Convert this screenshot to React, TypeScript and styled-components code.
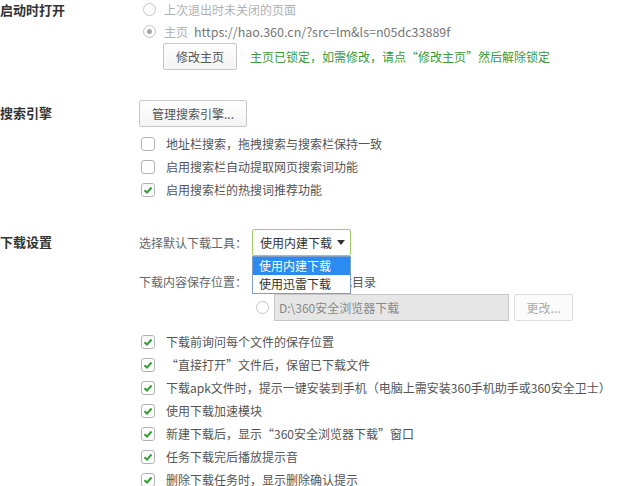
import React from 'react';
import styled, { createGlobalStyle } from 'styled-components';

const GlobalStyle = createGlobalStyle`
  body {
    margin: 0;
    background: #fff;
    font-family: 'Noto Sans CJK SC', 'Microsoft YaHei', sans-serif;
    font-size: 12px;
    color: #555;
  }
`;

const searchOptions = [
  { label: '地址栏搜索，拖拽搜索与搜索栏保持一致', checked: false },
  { label: '启用搜索栏自动提取网页搜索词功能', checked: false },
  { label: '启用搜索栏的热搜词推荐功能', checked: true },
];

const downloadOptions = [
  '下载前询问每个文件的保存位置',
  '“直接打开”文件后，保留已下载文件',
  '下载apk文件时，提示一键安装到手机（电脑上需安装360手机助手或360安全卫士）',
  '使用下载加速模块',
  '新建下载后，显示“360安全浏览器下载”窗口',
  '任务下载完后播放提示音',
  '删除下载任务时，显示删除确认提示',
];

const Check: React.FC<{ checked: boolean; label: string }> = ({ checked, label }) => (
  <CheckRow>
    <CheckBox>
      {checked && (
        <svg width='10' height='10' viewBox='0 0 10 10'>
          <path d='M1.5 5.2 L4 7.6 L8.5 2.5' fill='none' stroke='#32a032' strokeWidth='2.1' />
        </svg>
      )}
    </CheckBox>
    <CheckText>{label}</CheckText>
  </CheckRow>
);

export default function App() {
  return (
    <Page>
      <GlobalStyle />
      <Section $top={0}>
        <SectionTitle $pad={0}>启动时打开</SectionTitle>
        <Content>
          <RadioRow $h={18} $gap={8} $disabled>
            <Radio />
            <span>上次退出时未关闭的页面</span>
          </RadioRow>
          <RadioRow $h={18} $gap={8} $disabled style={{ marginTop: 4 }}>
            <Radio $checked />
            <span>主页</span>
            <Url>https://hao.360.cn/?src=lm&amp;ls=n05dc33889f</Url>
          </RadioRow>
          <LockRow>
            <Button>修改主页</Button>
            <LockNote>主页已锁定，如需修改，请点“修改主页”然后解除锁定</LockNote>
          </LockRow>
        </Content>
      </Section>

      <Section $top={30}>
        <SectionTitle $pad={3}>搜索引擎</SectionTitle>
        <Content>
          <div>
            <Button>管理搜索引擎...</Button>
          </div>
          <CheckList $top={5}>
            {searchOptions.map(o => (
              <Check key={o.label} checked={o.checked} label={o.label} />
            ))}
          </CheckList>
        </Content>
      </Section>

      <Section $top={28}>
        <SectionTitle $pad={3}>下载设置</SectionTitle>
        <Content>
          <FieldRow $h={27}>
            <FieldLabel>选择默认下载工具：</FieldLabel>
            <SelectWrap>
              <Select>
                使用内建下载
                <Caret />
              </Select>
              <Popup>
                <PopupItem $active>使用内建下载</PopupItem>
                <PopupItem>使用迅雷下载</PopupItem>
              </Popup>
            </SelectWrap>
          </FieldRow>
          <FieldRow $h={22} style={{ marginTop: 14 }}>
            <FieldLabel>下载内容保存位置：</FieldLabel>
            <RadioRow $h={22} $gap={11}>
              <Radio />
              <span>使用上次下载目录</span>
            </RadioRow>
          </FieldRow>
          <PathRow>
            <Radio />
            <PathInput>D:\360安全浏览器下载</PathInput>
            <Button $disabled $w={59}>更改...</Button>
          </PathRow>
          <CheckList $top={9}>
            {downloadOptions.map(o => (
              <Check key={o} checked label={o} />
            ))}
          </CheckList>
        </Content>
      </Section>
    </Page>
  );
}

const Page = styled.div`
  width: 620px;
  height: 486px;
  overflow: hidden;
  display: flex;
  flex-direction: column;
`;

const Section = styled.section<{ $top: number }>`
  display: grid;
  grid-template-columns: 139px 1fr;
  margin-top: ${p => p.$top}px;
`;

const SectionTitle = styled.div<{ $pad: number }>`
  padding-top: ${p => p.$pad}px;
  line-height: 20px;
  font-size: 13px;
  font-weight: bold;
  color: #333;
`;

const Content = styled.div`
  display: flex;
  flex-direction: column;
`;

const RadioRow = styled.div<{ $h: number; $gap: number; $disabled?: boolean }>`
  display: flex;
  align-items: center;
  height: ${p => p.$h}px;
  padding-left: 4px;
  gap: ${p => p.$gap}px;
  color: ${p => (p.$disabled ? '#b0b0b0' : '#555')};
  white-space: nowrap;
`;

const Radio = styled.span<{ $checked?: boolean }>`
  flex: none;
  box-sizing: border-box;
  width: 13px;
  height: 13px;
  border: 1px solid #c4c4c4;
  border-radius: 50%;
  background: #fff;
  display: flex;
  align-items: center;
  justify-content: center;
  &::after {
    content: '';
    display: ${p => (p.$checked ? 'block' : 'none')};
    width: 5px;
    height: 5px;
    border-radius: 50%;
    background: #a8a8a8;
  }
`;

const Url = styled.span`
  margin-left: -2px;
  color: #777;
  font-size: 12.5px;
`;

const LockRow = styled.div`
  display: flex;
  align-items: center;
  gap: 13px;
  margin-top: 3px;
  padding-left: 24px;
`;

const Button = styled.div<{ $disabled?: boolean; $w?: number }>`
  display: inline-flex;
  align-items: center;
  justify-content: center;
  box-sizing: border-box;
  height: 27px;
  padding: 0 12px;
  ${p => (p.$w ? `width: ${p.$w}px;` : '')}
  border: 1px solid ${p => (p.$disabled ? '#dcdcdc' : '#c8c8c8')};
  border-radius: 2px;
  background: ${p => (p.$disabled ? '#fbfbfb' : 'linear-gradient(#fff, #f3f3f3)')};
  color: ${p => (p.$disabled ? '#aaa' : '#555')};
  white-space: nowrap;
`;

const LockNote = styled.span`
  color: #3a9a3a;
  white-space: nowrap;
`;

const CheckList = styled.div<{ $top: number }>`
  display: flex;
  flex-direction: column;
  margin-top: ${p => p.$top}px;
`;

const CheckRow = styled.div`
  display: flex;
  align-items: center;
  gap: 11px;
  height: 23px;
  padding-left: 2px;
  color: #555;
  white-space: nowrap;
`;

const CheckText = styled.span`
  line-height: 14px;
`;

const CheckBox = styled.span`
  flex: none;
  box-sizing: border-box;
  width: 14px;
  height: 14px;
  border: 1px solid #b3b3b3;
  border-radius: 3px;
  background: #fff;
  display: flex;
  align-items: center;
  justify-content: center;
`;

const FieldRow = styled.div<{ $h: number }>`
  display: flex;
  align-items: center;
  height: ${p => p.$h}px;
`;

const FieldLabel = styled.span`
  flex: none;
  width: 113px;
  color: #666;
  white-space: nowrap;
`;

const SelectWrap = styled.div`
  position: relative;
`;

const Select = styled.div`
  box-sizing: border-box;
  display: flex;
  align-items: center;
  justify-content: space-between;
  width: 99px;
  height: 27px;
  padding: 0 5px 0 7px;
  border: 1px solid #9fcf6a;
  border-radius: 2px;
  background: #fff;
  color: #333;
  white-space: nowrap;
`;

const Caret = styled.span`
  width: 0;
  height: 0;
  border-left: 4px solid transparent;
  border-right: 4px solid transparent;
  border-top: 5px solid #333;
`;

const Popup = styled.div`
  position: absolute;
  top: 27px;
  left: 0;
  z-index: 2;
  box-sizing: border-box;
  width: 99px;
  border: 1px solid #7f9ec9;
  background: #fff;
`;

const PopupItem = styled.div<{ $active?: boolean }>`
  height: 18px;
  line-height: 18px;
  padding-left: 6px;
  background: ${p => (p.$active ? '#2a8cf0' : '#fff')};
  color: ${p => (p.$active ? '#fff' : '#333')};
  white-space: nowrap;
`;

const PathRow = styled.div`
  display: flex;
  align-items: center;
  gap: 5px;
  margin-top: 2px;
  padding-left: 117px;
`;

const PathInput = styled.div`
  box-sizing: border-box;
  display: flex;
  align-items: center;
  width: 235px;
  height: 27px;
  padding-left: 4px;
  border: 1px solid #c6c6c6;
  background: #e6e6e6;
  color: #888;
  white-space: nowrap;
`;
